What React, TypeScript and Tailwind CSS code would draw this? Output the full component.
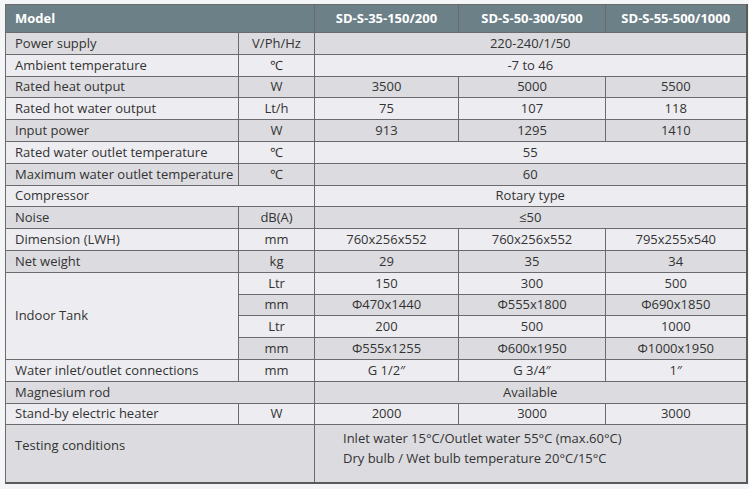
import React from "react";

type Row = {
  label?: string;
  unit?: string;
  span?: boolean; // label spans label+unit
  values: string[]; // 1 => spans 3 cols
  grey: boolean;
};

const rows: Row[] = [
  { label: "Power supply", unit: "V/Ph/Hz", values: ["220-240/1/50"], grey: true },
  { label: "Ambient temperature", unit: "℃", values: ["-7 to 46"], grey: false },
  { label: "Rated heat output", unit: "W", values: ["3500", "5000", "5500"], grey: true },
  { label: "Rated hot water output", unit: "Lt/h", values: ["75", "107", "118"], grey: false },
  { label: "Input power", unit: "W", values: ["913", "1295", "1410"], grey: true },
  { label: "Rated water outlet temperature", unit: "℃", values: ["55"], grey: false },
  { label: "Maximum water outlet temperature", unit: "℃", values: ["60"], grey: true },
  { label: "Compressor", span: true, values: ["Rotary type"], grey: false },
  { label: "Noise", unit: "dB(A)", values: ["≤50"], grey: true },
  { label: "Dimension (LWH)", unit: "mm", values: ["760x256x552", "760x256x552", "795x255x540"], grey: false },
  { label: "Net weight", unit: "kg", values: ["29", "35", "34"], grey: true },
];

const tank = [
  { unit: "Ltr", values: ["150", "300", "500"], grey: false },
  { unit: "mm", values: ["Φ470x1440", "Φ555x1800", "Φ690x1850"], grey: true },
  { unit: "Ltr", values: ["200", "500", "1000"], grey: false },
  { unit: "mm", values: ["Φ555x1255", "Φ600x1950", "Φ1000x1950"], grey: true },
];

const rows2: Row[] = [
  { label: "Water inlet/outlet connections", unit: "mm", values: ["G 1/2″", "G 3/4″", "1″"], grey: false },
  { label: "Magnesium rod", span: true, values: ["Available"], grey: true },
  { label: "Stand-by electric heater", unit: "W", values: ["2000", "3000", "3000"], grey: false },
];

const bd = "border border-[#6b6b6b]";
const light = "bg-[#ededf1]";
const grey = "bg-[#dcdce0]";

function DataRow({ r }: { r: Row }) {
  const bg = r.grey ? grey : light;
  return (
    <tr className="h-[21.8px]">
      <td colSpan={r.span ? 2 : 1} className={`${bd} ${bg} pl-[9px] text-left leading-none`}>
        {r.label}
      </td>
      {!r.span && <td className={`${bd} ${bg} text-center leading-none`}>{r.unit}</td>}
      {r.values.length === 1 ? (
        <td colSpan={3} className={`${bd} ${bg} text-center leading-none`}>
          {r.values[0]}
        </td>
      ) : (
        r.values.map((v, i) => (
          <td key={i} className={`${bd} ${bg} text-center leading-none`}>
            {v}
          </td>
        ))
      )}
    </tr>
  );
}

export default function App() {
  return (
    <div
      className="w-[749px] h-[489px] bg-[#f3f5f7] pt-[4px] pl-[5px] overflow-hidden"
      style={{ fontFamily: '"Open Sans", "Noto Sans", sans-serif' }}
    >
      <table className="w-[741px] table-fixed border-collapse text-[13px] text-[#333] border-r-2 border-b-2 border-[#5a5a5a]">
        <colgroup>
          <col className="w-[233px]" />
          <col className="w-[76px]" />
          <col className="w-[144px]" />
          <col className="w-[147px]" />
          <col className="w-[141px]" />
        </colgroup>
        <tbody>
          <tr className="h-[28px] bg-[#6c8088] text-white font-bold">
            <td colSpan={2} className={`${bd} pl-[9px] text-left`}>Model</td>
            <td className={`${bd} text-center`}>SD-S-35-150/200</td>
            <td className={`${bd} text-center`}>SD-S-50-300/500</td>
            <td className={`${bd} text-center`}>SD-S-55-500/1000</td>
          </tr>
          {rows.map((r, i) => (
            <DataRow key={i} r={r} />
          ))}
          {tank.map((t, i) => {
            const bg = t.grey ? grey : light;
            return (
              <tr key={i} className="h-[21.8px]">
                {i === 0 && (
                  <td rowSpan={4} className={`${bd} ${light} pl-[9px] text-left`}>
                    Indoor Tank
                  </td>
                )}
                <td className={`${bd} ${bg} text-center leading-none`}>{t.unit}</td>
                {t.values.map((v, j) => (
                  <td key={j} className={`${bd} ${bg} text-center leading-none`}>
                    {v}
                  </td>
                ))}
              </tr>
            );
          })}
          {rows2.map((r, i) => (
            <DataRow key={i} r={r} />
          ))}
          <tr className="h-[58px]">
            <td colSpan={2} className={`${bd} ${grey} pl-[9px] pb-[16px] text-left align-middle`}>
              Testing conditions
            </td>
            <td colSpan={3} className={`${bd} ${grey} pl-[28px] pb-[12px] text-left align-middle leading-[20px]`}>
              <div>Inlet water 15°C/Outlet water 55°C (max.60°C)</div>
              <div>Dry bulb / Wet bulb temperature 20°C/15°C</div>
            </td>
          </tr>
        </tbody>
      </table>
    </div>
  );
}
